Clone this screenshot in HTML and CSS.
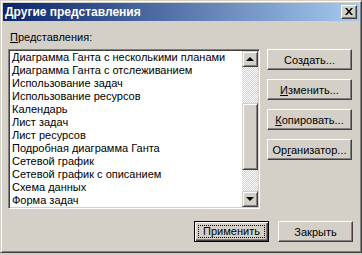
FILE: index.html
```html
<!DOCTYPE html>
<html lang="ru">
<head>
  <meta charset="UTF-8" />
  <title>Другие представления</title>
  <link rel="stylesheet" href="styles.css">
</head>
<body>
  <div class="window">
    <div class="titlebar">
      <span class="title">Другие представления</span>
      <span class="close-btn">
        <svg width="8" height="7" viewBox="0 0 8 7"><path d="M0 0h2l2 2.5 2-2.5h2l-3 3.5 3 3.5h-2l-2-2.5-2 2.5h-2l3-3.5z" fill="#000"/></svg>
      </span>
    </div>
    <div class="content">
      <div class="main-row">
        <div class="left-col">
          <div class="label"><u>П</u>редставления:</div>
          <div class="listbox">
            <ul class="items">
              <li>Диаграмма Ганта с несколькими планами</li>
              <li>Диаграмма Ганта с отслеживанием</li>
              <li>Использование задач</li>
              <li>Использование ресурсов</li>
              <li>Календарь</li>
              <li>Лист задач</li>
              <li>Лист ресурсов</li>
              <li>Подробная диаграмма Ганта</li>
              <li>Сетевой график</li>
              <li>Сетевой график с описанием</li>
              <li>Схема данных</li>
              <li>Форма задач</li>
            </ul>
            <div class="scrollbar">
              <div class="sb-btn"><span class="arrow-up"></span></div>
              <div class="sb-track">
                <div class="sb-gap-top"></div>
                <div class="sb-thumb"></div>
              </div>
              <div class="sb-btn"><span class="arrow-down"></span></div>
            </div>
          </div>
        </div>
        <div class="right-col">
          <button class="btn">Соз<u>д</u>ать...</button>
          <button class="btn"><u>И</u>зменить...</button>
          <button class="btn"><u>К</u>опировать...</button>
          <button class="btn">Ор<u>г</u>анизатор...</button>
        </div>
      </div>
      <div class="bottom-row">
        <button class="btn btn-default"><span class="focus">Применить</span></button>
        <button class="btn btn-small">Закрыть</button>
      </div>
    </div>
  </div>
</body>
</html>
```

FILE: styles.css
```css
html, body {
  margin: 0;
  background: #d4d0c8;
}
body {
  font-family: "Liberation Sans", Arial, sans-serif;
  font-size: 11px;
  color: #000;
}
.window {
  width: 362px;
  height: 253px;
  box-sizing: border-box;
  border: 1px solid;
  border-color: #d4d0c8 #404040 #404040 #d4d0c8;
  box-shadow: inset 1px 1px #fff, inset -1px -1px #808080;
  padding: 2px;
  background: #d4d0c8;
}
.titlebar {
  height: 18px;
  display: flex;
  align-items: center;
  justify-content: space-between;
  padding: 0 2px;
  background: linear-gradient(to right, #0a246a, #a6caf0);
}
.title {
  color: #fff;
  font-weight: bold;
  font-size: 12px;
}
.close-btn {
  width: 16px;
  height: 14px;
  box-sizing: border-box;
  background: #d4d0c8;
  border: 1px solid;
  border-color: #fff #404040 #404040 #fff;
  box-shadow: inset -1px -1px #808080;
  display: flex;
  align-items: center;
  justify-content: center;
}
.close-btn svg {
  display: block;
  margin: 0 1px 1px 0;
}
.content {
  padding: 10px 6px 0 5px;
}
.main-row {
  display: flex;
  gap: 7px;
}
.label {
  height: 13px;
  line-height: 13px;
  margin: 0 0 5px 2px;
}
.listbox {
  width: 252px;
  height: 160px;
  box-sizing: border-box;
  display: flex;
  background: #fff;
  border: 1px solid;
  border-color: #808080 #fff #fff #808080;
  box-shadow: inset 1px 1px #404040, inset -1px -1px #d4d0c8;
  padding: 1px;
}
.items {
  flex: 1;
  min-width: 0;
  overflow: hidden;
  list-style: none;
  margin: 0;
  padding: 0 0 0 2px;
}
.items li {
  height: 13px;
  line-height: 13px;
  white-space: nowrap;
}
.scrollbar {
  width: 16px;
  flex: none;
  display: flex;
  flex-direction: column;
}
.sb-btn, .sb-thumb {
  box-sizing: border-box;
  background: #d4d0c8;
  border: 1px solid;
  border-color: #d4d0c8 #404040 #404040 #d4d0c8;
  box-shadow: inset 1px 1px #fff, inset -1px -1px #808080;
}
.sb-btn {
  height: 16px;
  display: flex;
  align-items: center;
  justify-content: center;
}
.arrow-up, .arrow-down {
  width: 0;
  height: 0;
  border-left: 4px solid transparent;
  border-right: 4px solid transparent;
}
.arrow-up {
  border-bottom: 4px solid #000;
}
.arrow-down {
  border-top: 4px solid #000;
}
.sb-track {
  flex: 1;
  display: flex;
  flex-direction: column;
  background: repeating-conic-gradient(#fff 0 25%, #d4d0c8 0 50%) 0 0 / 2px 2px;
}
.sb-gap-top {
  height: 36px;
}
.sb-thumb {
  height: 67px;
}
.right-col {
  display: flex;
  flex-direction: column;
  gap: 9px;
  padding-top: 18px;
}
.btn {
  width: 85px;
  height: 21px;
  box-sizing: border-box;
  padding: 0;
  font: inherit;
  color: #000;
  background: #d4d0c8;
  border: 1px solid;
  border-color: #fff #404040 #404040 #fff;
  box-shadow: inset -1px -1px #808080;
}
.btn-small {
  width: 75px;
}
.btn-default {
  width: 75px;
  border: 1px solid #000;
  box-shadow: inset 1px 1px #fff, inset -1px -1px #404040, inset -2px -2px #808080;
  padding: 3px;
}
.focus {
  display: block;
  height: 100%;
  box-sizing: border-box;
  border: 1px dotted #000;
  line-height: 11px;
}
.bottom-row {
  display: flex;
  justify-content: flex-end;
  gap: 9px;
  margin-top: 12px;
}
```
